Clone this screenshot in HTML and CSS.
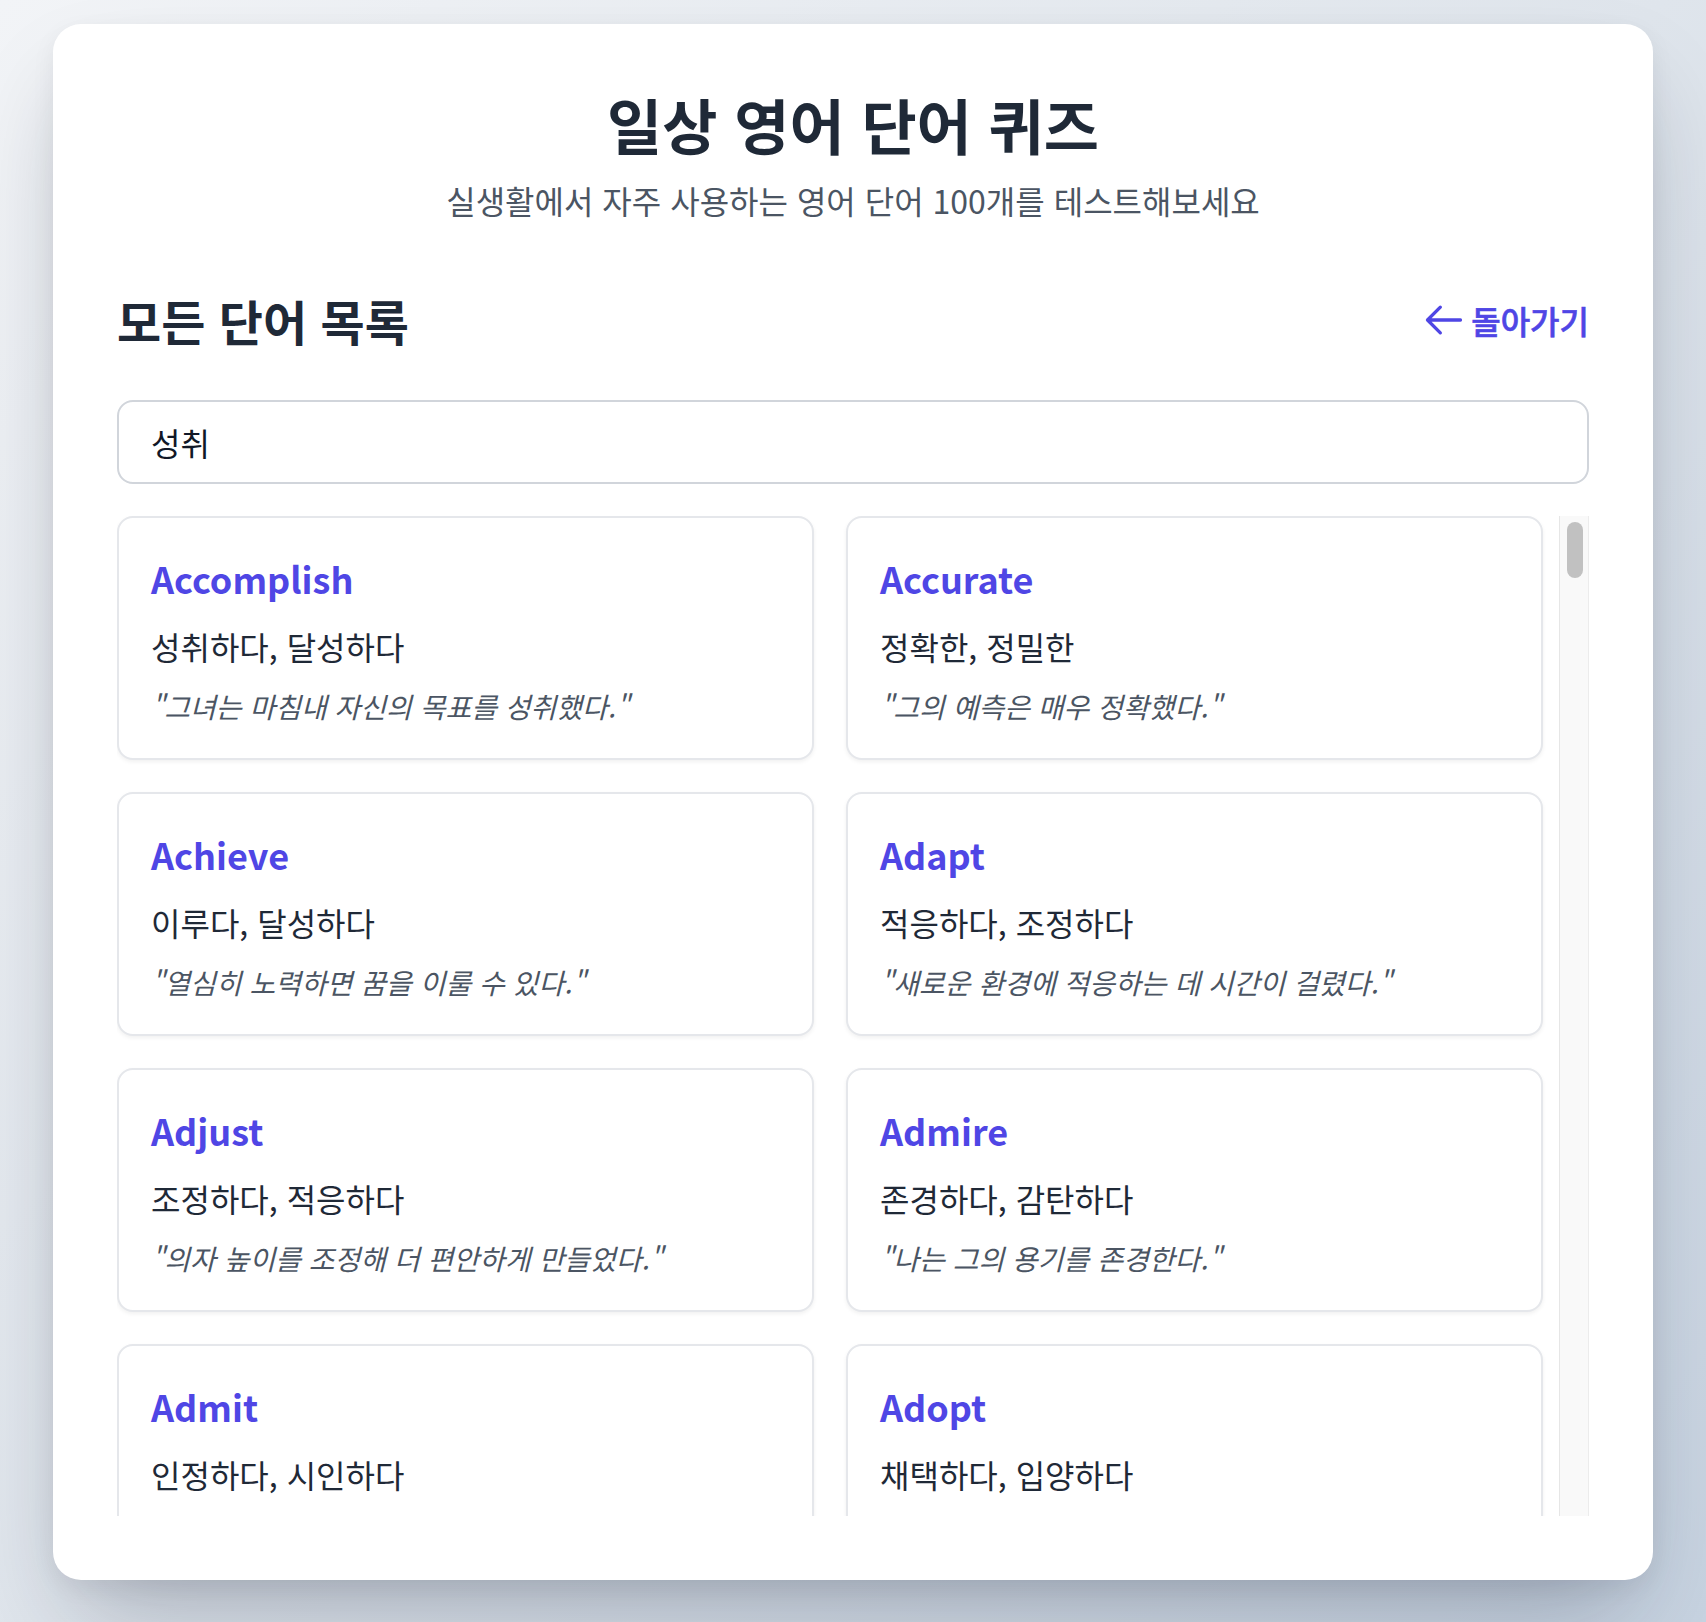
FILE: index.html
```html
<!DOCTYPE html>
<html lang="ko">
<head>
<meta charset="utf-8">
<title>일상 영어 단어 퀴즈</title>
<link rel="stylesheet" href="styles.css">
</head>
<body>
<main class="app">
  <header class="app-header">
    <h1 class="app-title">일상 영어 단어 퀴즈</h1>
    <p class="app-subtitle">실생활에서 자주 사용하는 영어 단어 100개를 테스트해보세요</p>
  </header>
  <section class="word-section">
    <div class="section-head">
      <h2 class="section-title">모든 단어 목록</h2>
      <a class="back-link" href="#">
        <svg class="back-icon" viewBox="0 0 24 24" fill="none" stroke="currentColor" stroke-width="1.8" stroke-linecap="round" stroke-linejoin="round" aria-hidden="true"><path d="M10 19l-7-7m0 0l7-7m-7 7h18"/></svg>
        <span>돌아가기</span>
      </a>
    </div>
    <input class="search-input" type="text" value="성취" aria-label="단어 검색">
    <div class="word-list">
      <div class="word-scroll">
        <div class="word-grid" id="wordGrid"></div>
      </div>
      <div class="scroll-track" aria-hidden="true"><div class="scroll-thumb"></div></div>
    </div>
  </section>
</main>
<script src="script.js"></script>
</body>
</html>
```

FILE: styles.css
```css
html {
  background: linear-gradient(135deg, #f2f4f7 0%, #dfe5ec 50%, #c7d3e1 100%);
  min-height: 100%;
}
body {
  margin: 0;
  padding: 24px 0 42px;
  font-family: "Noto Sans CJK KR", "Noto Sans", sans-serif;
  color: #1f2937;
}
.app {
  width: 1600px;
  box-sizing: border-box;
  margin: 0 auto;
  padding: 64px;
  background: #ffffff;
  border-radius: 28px;
  box-shadow: 0 50px 100px -24px rgba(15, 23, 42, 0.28), 0 8px 24px rgba(15, 23, 42, 0.06);
}
.app-header {
  text-align: center;
  margin-bottom: 64px;
}
.app-title {
  margin: 0;
  font-size: 60px;
  line-height: 72px;
  font-weight: 700;
  color: #1f2937;
}
.app-subtitle {
  margin: 16px 0 0;
  font-size: 32px;
  line-height: 48px;
  color: #4b5563;
}
.section-head {
  display: flex;
  justify-content: space-between;
  align-items: center;
  margin-bottom: 48px;
}
.section-title {
  margin: 0;
  font-size: 48px;
  line-height: 64px;
  font-weight: 700;
  color: #1f2937;
}
.back-link {
  display: flex;
  align-items: center;
  gap: 5px;
  font-size: 32px;
  line-height: 48px;
  font-weight: 500;
  color: #4f46e5;
  text-decoration: none;
  -webkit-text-stroke: 0.6px currentColor;
}
.back-icon {
  width: 44px;
  height: 44px;
  flex: none;
}
.search-input {
  display: block;
  width: 100%;
  box-sizing: border-box;
  margin: 0 0 32px;
  padding: 16px 32px;
  border: 2px solid #d1d5db;
  border-radius: 16px;
  font-family: inherit;
  font-size: 32px;
  line-height: 48px;
  color: #111827;
  background: #fff;
  outline: none;
}
.word-list {
  display: flex;
  height: 1000px;
}
.word-scroll {
  flex: 1;
  min-width: 0;
  overflow-y: auto;
  padding-right: 16px;
  scrollbar-width: none;
}
.word-scroll::-webkit-scrollbar {
  display: none;
}
.scroll-track {
  flex: none;
  width: 28px;
  background: #f9f9f9;
  border-left: 1px solid #e6e6e6;
  border-right: 1px solid #ececec;
}
.scroll-thumb {
  width: 16px;
  height: 56px;
  margin: 6px 0 0 7px;
  border-radius: 8px;
  background: #c1c1c1;
}
.word-grid {
  display: grid;
  grid-template-columns: 1fr 1fr;
  gap: 32px;
}
.word-card {
  border: 2px solid #e5e7eb;
  border-radius: 16px;
  padding: 32px;
  background: #fff;
  box-shadow: 0 2px 4px rgba(0, 0, 0, 0.06);
}
.word-en {
  margin: 0;
  font-size: 36px;
  line-height: 56px;
  font-weight: 700;
  color: #4f46e5;
}
.word-ko {
  margin: 16px 0 0;
  font-size: 32px;
  line-height: 48px;
  color: #1f2937;
}
.word-example {
  margin: 16px 0 0;
  font-size: 28px;
  line-height: 40px;
  font-style: italic;
  color: #4b5563;
}
```

FILE: script.js
```js
var WORDS = [
"Accomplish|성취하다, 달성하다|그녀는 마침내 자신의 목표를 성취했다.",
"Accurate|정확한, 정밀한|그의 예측은 매우 정확했다.",
"Achieve|이루다, 달성하다|열심히 노력하면 꿈을 이룰 수 있다.",
"Adapt|적응하다, 조정하다|새로운 환경에 적응하는 데 시간이 걸렸다.",
"Adjust|조정하다, 적응하다|의자 높이를 조정해 더 편안하게 만들었다.",
"Admire|존경하다, 감탄하다|나는 그의 용기를 존경한다.",
"Admit|인정하다, 시인하다|그는 자신의 실수를 인정했다.",
"Adopt|채택하다, 입양하다|회사는 새로운 정책을 채택했다.",
"Advice|조언, 충고|친구의 조언이 큰 도움이 되었다.",
"Afford|~할 여유가 있다|지금은 새 차를 살 여유가 없다.",
"Agree|동의하다|나는 너의 의견에 동의해.",
"Allow|허락하다|부모님이 여행을 허락해 주셨다.",
"Announce|발표하다, 알리다|회사는 새 제품을 발표했다.",
"Anxious|불안한, 걱정하는|시험 전에는 항상 불안하다.",
"Apologize|사과하다|늦어서 정말 사과드립니다.",
"Appear|나타나다, ~처럼 보이다|그는 피곤해 보였다.",
"Apply|지원하다, 적용하다|그녀는 그 회사에 지원했다.",
"Appreciate|감사하다, 진가를 알다|도와주셔서 정말 감사합니다.",
"Approach|접근하다, 다가가다|태풍이 빠르게 다가오고 있다.",
"Argue|논쟁하다, 주장하다|그들은 사소한 일로 다퉜다.",
"Arrange|준비하다, 정리하다|회의 일정을 준비해 주세요.",
"Arrive|도착하다|기차가 정시에 도착했다.",
"Attend|참석하다|내일 회의에 참석할 예정이다.",
"Attitude|태도|긍정적인 태도가 중요하다.",
"Available|이용 가능한|이 서비스는 24시간 이용 가능하다.",
"Avoid|피하다|출퇴근 시간을 피해서 가자.",
"Aware|알고 있는, 의식하는|나는 그 문제를 잘 알고 있다.",
"Balance|균형|일과 삶의 균형이 필요하다.",
"Benefit|이익, 혜택|운동은 건강에 많은 이익이 있다.",
"Borrow|빌리다|도서관에서 책을 빌렸다.",
"Brave|용감한|그는 정말 용감한 소방관이다.",
"Budget|예산|이번 달 예산이 부족하다.",
"Calm|침착한, 차분한|위기 상황에서도 침착해야 한다.",
"Cancel|취소하다|비 때문에 경기가 취소되었다.",
"Careful|조심하는, 신중한|길을 건널 때 조심해라.",
"Celebrate|축하하다, 기념하다|우리는 그의 생일을 축하했다.",
"Challenge|도전, 과제|이 일은 나에게 큰 도전이다.",
"Choose|선택하다, 고르다|마음에 드는 색을 골라 보세요.",
"Comfortable|편안한|이 소파는 정말 편안하다.",
"Compare|비교하다|두 제품의 가격을 비교했다.",
"Complain|불평하다|그는 항상 날씨에 대해 불평한다.",
"Confident|자신감 있는|그녀는 발표에 자신감이 있었다.",
"Consider|고려하다|이사를 진지하게 고려하고 있다.",
"Convenient|편리한|지하철은 매우 편리하다.",
"Curious|호기심 많은|아이들은 모든 것에 호기심이 많다.",
"Decide|결정하다|나는 유학을 가기로 결정했다.",
"Delay|지연, 미루다|비행기가 두 시간 지연되었다.",
"Deliver|배달하다, 전달하다|택배가 오늘 배달될 예정이다.",
"Describe|묘사하다, 설명하다|그 장소를 자세히 묘사해 주세요.",
"Develop|개발하다, 발전시키다|그는 새로운 앱을 개발했다.",
"Discover|발견하다|우리는 멋진 식당을 발견했다.",
"Discuss|논의하다|그 문제는 내일 논의하자.",
"Efficient|효율적인|이 방법이 훨씬 효율적이다.",
"Encourage|격려하다|선생님은 항상 나를 격려해 주셨다.",
"Enjoy|즐기다|주말을 즐겁게 보내세요.",
"Environment|환경|우리는 환경을 보호해야 한다.",
"Essential|필수적인|물은 생존에 필수적이다.",
"Expect|기대하다, 예상하다|좋은 결과를 기대하고 있다.",
"Experience|경험|해외 여행은 좋은 경험이었다.",
"Explain|설명하다|규칙을 다시 설명해 줄래?",
"Familiar|익숙한, 친숙한|이 노래는 귀에 익숙하다.",
"Flexible|유연한|근무 시간이 유연해서 좋다.",
"Forgive|용서하다|제 실수를 용서해 주세요.",
"Generous|관대한, 후한|그는 친구들에게 매우 관대하다.",
"Grateful|감사하는|도움에 정말 감사하고 있어요.",
"Honest|정직한|정직한 대답을 해 주세요.",
"Improve|향상시키다, 개선하다|영어 실력을 향상시키고 싶다.",
"Include|포함하다|가격에 세금이 포함되어 있다.",
"Increase|증가하다|물가가 계속 증가하고 있다.",
"Influence|영향, 영향을 주다|부모님은 나에게 큰 영향을 주셨다.",
"Introduce|소개하다|제 친구를 소개할게요.",
"Invite|초대하다|그녀를 파티에 초대했다.",
"Knowledge|지식|독서는 지식을 넓혀 준다.",
"Manage|관리하다, 해내다|그는 팀을 잘 관리한다.",
"Mention|언급하다|그는 그 일에 대해 언급하지 않았다.",
"Necessary|필요한|여권은 해외여행에 필요하다.",
"Opportunity|기회|이것은 좋은 기회이다.",
"Patient|인내심 있는|조금만 참고 기다려 주세요.",
"Polite|예의 바른|그 학생은 매우 예의 바르다.",
"Prefer|선호하다|나는 커피보다 차를 선호한다.",
"Prepare|준비하다|시험을 열심히 준비하고 있다.",
"Protect|보호하다|선크림은 피부를 보호해 준다.",
"Purpose|목적|이번 여행의 목적은 휴식이다.",
"Realize|깨닫다|그제야 실수를 깨달았다.",
"Recommend|추천하다|좋은 식당을 추천해 주세요.",
"Reduce|줄이다|설탕 섭취를 줄이려고 한다.",
"Remember|기억하다|그날을 아직도 기억한다.",
"Require|필요로 하다|이 일은 많은 시간을 필요로 한다.",
"Respect|존중하다|서로의 의견을 존중해야 한다.",
"Responsible|책임 있는|그는 그 프로젝트를 책임지고 있다.",
"Schedule|일정|이번 주 일정이 꽉 찼다.",
"Solve|해결하다|우리는 문제를 함께 해결했다.",
"Suggest|제안하다|그는 새로운 아이디어를 제안했다.",
"Support|지지하다, 지원하다|가족이 항상 나를 지지해 준다.",
"Surprise|놀라게 하다|그 소식은 모두를 놀라게 했다.",
"Valuable|소중한, 가치 있는|이 경험은 매우 소중하다.",
"Volunteer|자원봉사하다|주말마다 자원봉사를 한다.",
"Weather|날씨|오늘 날씨가 정말 좋다.",
"Wonder|궁금해하다|그가 어디 있는지 궁금하다.",
"Worry|걱정하다|너무 걱정하지 마세요."
];
(function () {
  var grid = document.getElementById("wordGrid");
  WORDS.forEach(function (line) {
    var p = line.split("|");
    var card = document.createElement("article");
    card.className = "word-card";
    var en = document.createElement("h3");
    en.className = "word-en";
    en.textContent = p[0];
    var ko = document.createElement("p");
    ko.className = "word-ko";
    ko.textContent = p[1];
    var ex = document.createElement("p");
    ex.className = "word-example";
    ex.textContent = "\"" + p[2] + "\"";
    card.appendChild(en);
    card.appendChild(ko);
    card.appendChild(ex);
    grid.appendChild(card);
  });
})();
```
